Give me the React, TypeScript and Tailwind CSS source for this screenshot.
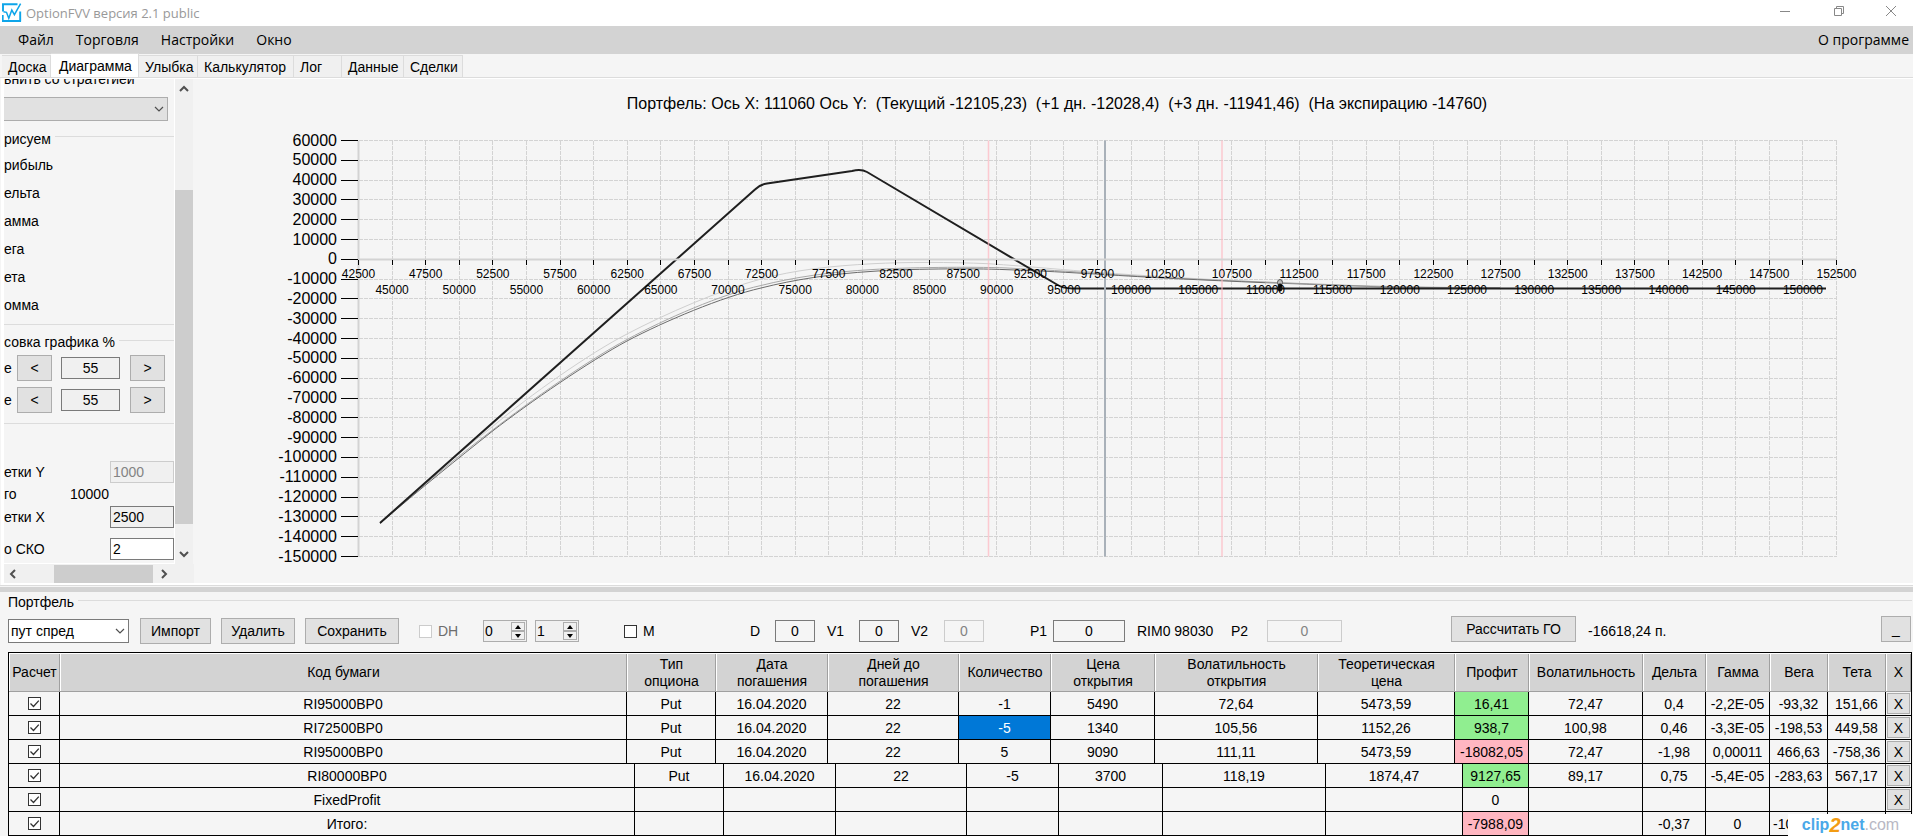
import { useState } from 'react';
import clsx from 'clsx';

// plot area of the chart
const X0 = 358.5;
const X1 = 1836.5;
const Y0 = 140.5;
const Y1 = 556.5;
const xAt = (price: number) => X0 + ((price - 42500) / 110000) * (X1 - X0);
const yAt = (pnl: number) => Y0 + ((60000 - pnl) / 210000) * (Y1 - Y0);

const xTicks = Array.from({ length: 45 }, (_, i) => 42500 + i * 2500);
const yTicks = Array.from({ length: 22 }, (_, i) => 60000 - i * 10000);

const tabs = [
  { name: 'Доска', width: 'w-[49px]' },
  { name: 'Диаграмма', width: 'w-[88px]' },
  { name: 'Улыбка', width: 'w-[59px]' },
  { name: 'Калькулятор', width: 'w-24' },
  { name: 'Лог', width: 'w-12' },
  { name: 'Данные', width: 'w-[62px]' },
  { name: 'Сделки', width: 'w-[59px]' },
];

const columns = [
  { title: 'Расчет', width: 'w-[51px]' },
  { title: 'Код бумаги', width: 'flex-1' },
  { title: 'Тип опциона', width: 'w-[89px]' },
  { title: 'Дата погашения', width: 'w-[112px]' },
  { title: 'Дней до погашения', width: 'w-[131px]' },
  { title: 'Количество', width: 'w-[92px]' },
  { title: 'Цена открытия', width: 'w-[104px]' },
  { title: 'Волатильность открытия', width: 'w-[163px]' },
  { title: 'Теоретическая цена', width: 'w-[137px]' },
  { title: 'Профит', width: 'w-[74px]' },
  { title: 'Волатильность', width: 'w-[114px]' },
  { title: 'Дельта', width: 'w-[63px]' },
  { title: 'Гамма', width: 'w-16' },
  { title: 'Вега', width: 'w-[58px]' },
  { title: 'Тета', width: 'w-[58px]' },
  { title: 'X', width: 'w-[25px]' },
];

const PROFIT = 8;

type Row = { cells: string[]; narrow?: boolean; tone?: 'up' | 'down' };

const rows: Row[] = [
  { tone: 'up', cells: ['RI95000BP0', 'Put', '16.04.2020', '22', '-1', '5490', '72,64', '5473,59', '16,41', '72,47', '0,4', '-2,2E-05', '-93,32', '151,66'] },
  { tone: 'up', cells: ['RI72500BP0', 'Put', '16.04.2020', '22', '-5', '1340', '105,56', '1152,26', '938,7', '100,98', '0,46', '-3,3E-05', '-198,53', '449,58'] },
  { tone: 'down', cells: ['RI95000BP0', 'Put', '16.04.2020', '22', '5', '9090', '111,11', '5473,59', '-18082,05', '72,47', '-1,98', '0,00011', '466,63', '-758,36'] },
  { tone: 'up', narrow: true, cells: ['RI80000BP0', 'Put', '16.04.2020', '22', '-5', '3700', '118,19', '1874,47', '9127,65', '89,17', '0,75', '-5,4E-05', '-283,63', '567,17'] },
  { narrow: true, cells: ['FixedProfit', '', '', '', '', '', '', '', '0', '', '', '', '', ''] },
  { tone: 'down', narrow: true, cells: ['Итого:', '', '', '', '', '', '', '', '-7988,09', '', '-0,37', '0', '-10', ''] },
];

const btn = 'h-[26px] shrink-0 border border-[#adadad] bg-[#e1e1e1] text-center';
const box = 'h-[22px] shrink-0 border border-[#7a7a7a] bg-[#f0f0f0] outline-none';

function Chevron({ dir = 'down', bold }: { dir?: 'up' | 'down' | 'left' | 'right'; bold?: boolean }) {
  const d = { down: 'M1 3l4 4 4-4', up: 'M1 7l4-4 4 4', left: 'M7 1L3 5l4 4', right: 'M3 1l4 4-4 4' }[dir];
  return (
    <svg viewBox="0 0 10 10" className="size-[10px]" fill="none" stroke="#505050" strokeWidth={bold ? 2 : 1.2}>
      <path d={d} />
    </svg>
  );
}

function Check({ label, checked, disabled }: { label: string; checked?: boolean; disabled?: boolean }) {
  const [on, setOn] = useState(!!checked);
  return (
    <span className="relative block size-[13px] shrink-0">
      <input
        type="checkbox"
        aria-label={label}
        checked={on}
        disabled={disabled}
        onChange={(e) => setOn(e.target.checked)}
        className="block size-[13px] appearance-none border border-[#333] bg-white disabled:border-[#ccc]"
      />
      {on && (
        <svg viewBox="0 0 13 13" className="pointer-events-none absolute inset-0" fill="none" stroke="#333" strokeWidth="1.3">
          <path d="M2.5 6.5l3 3L10.8 3.6" />
        </svg>
      )}
    </span>
  );
}

function Spinner({ label, value }: { label: string; value: string }) {
  return (
    <div className="flex h-[22px] w-11 shrink-0 border border-[#adadad] bg-[#f0f0f0] p-px">
      <input aria-label={label} defaultValue={value} className="w-6 min-w-0 flex-1 bg-transparent outline-none" />
      <div className="flex w-[14px] flex-col">
        <button aria-label={`${label} больше`} className="flex flex-1 items-center justify-center border border-[#adadad]">
          <svg viewBox="0 0 6 4" className="h-1 w-[6px]"><path d="M0 4l3-4 3 4z" /></svg>
        </button>
        <button aria-label={`${label} меньше`} className="flex flex-1 items-center justify-center border border-[#adadad]">
          <svg viewBox="0 0 6 4" className="h-1 w-[6px]"><path d="M0 0l3 4 3-4z" /></svg>
        </button>
      </div>
    </div>
  );
}

function TitleBar() {
  return (
    <header className="flex h-[26px] items-start bg-white pl-0.5 font-['Open_Sans',sans-serif] text-[13px] text-[#999]">
      <svg viewBox="0 0 20 20" className="mt-[3px] size-5" fill="none" stroke="#0ea5e9">
        <path d="M0 1.2h15.5M1 1v7.5M0.7 12v6.3M0 18h19M18.2 8.5v10" strokeWidth="1.9" />
        <path d="M1.5 8.7l3 .6 2.3 6 3-8.2 2.6 4.6L18.6 .6" strokeWidth="1.5" />
      </svg>
      <h1 className="ml-1 leading-[26px]">OptionFVV версия 2.1 public</h1>
      <div className="mr-1 ml-auto flex gap-4">
        <button aria-label="Свернуть" className="flex h-[22px] w-10 items-center justify-center">
          <svg viewBox="0 0 10 10" className="size-[10px]" stroke="#888"><path d="M0 5.5h10" /></svg>
        </button>
        <button aria-label="Развернуть" className="flex h-[22px] w-9 items-center justify-center">
          <svg viewBox="0 0 10 10" className="size-[10px]" stroke="#888" fill="none">
            <path d="M.5 2.5h7v7h-7zM2.5 2.5v-2h7v7h-2" />
          </svg>
        </button>
        <button aria-label="Закрыть" className="flex h-[22px] w-9 items-center justify-center">
          <svg viewBox="0 0 10 10" className="size-[10px]" stroke="#888"><path d="M0 0l10 10M10 0L0 10" /></svg>
        </button>
      </div>
    </header>
  );
}

function SidePanel() {
  return (
    <aside className="flex w-[190px] shrink-0 flex-col">
      <div className="flex flex-1">
        <div className="w-[171px] overflow-hidden border-r border-b border-white">
          <label htmlFor="strategy" className="-mt-2 flex h-4 items-center leading-4">внить со стратегией</label>
          <div className="relative mt-[10px] mr-1.5">
            <select id="strategy" className="block h-6 w-full appearance-none border border-l-0 border-[#adadad] bg-[#e1e1e1]" />
            <span className="pointer-events-none absolute top-[7px] right-1"><Chevron /></span>
          </div>
          <div className="mt-[6px] flex h-6 items-center gap-1">
            рисуем
            <span className="mb-1.5 h-px flex-1 bg-[#dcdcdc]" />
          </div>
          {['рибыль', 'ельта', 'амма', 'ега', 'ета', 'омма'].map((name) => (
            <div key={name} className="flex h-7 items-center">{name}</div>
          ))}
          <div className="h-[6px] border-b border-[#dcdcdc]" />
          <div className="mt-1 flex h-[26px] items-center gap-1">
            совка графика %
            <span className="mb-1 h-px flex-1 bg-[#dcdcdc]" />
          </div>
          <div className="flex flex-col gap-1.5">
            {['zoomX', 'zoomY'].map((id) => (
              <div key={id} className="flex h-[26px] items-center text-sm">
                <label htmlFor={id} className="w-[13px]">е</label>
                <button className={clsx(btn, 'w-[35px]')}>&lt;</button>
                <input id={id} defaultValue="55" className={clsx(box, 'ml-[9px] w-[59px] text-center')} />
                <button className={clsx(btn, 'ml-[10px] w-[35px]')}>&gt;</button>
              </div>
            ))}
          </div>
          <div className="h-[11px] border-b border-[#dcdcdc]" />
          <div className="mt-[37px] flex h-[22px] items-center justify-between">
            <label htmlFor="gridY">етки Y</label>
            <input id="gridY" disabled defaultValue="1000" className={clsx(box, 'w-16 border-[#ccc] px-0.5 text-[#838383]')} />
          </div>
          <div className="flex h-[22px] items-center">
            <span className="w-[66px]">го</span>10000
          </div>
          <div className="mt-px flex h-[22px] items-center justify-between">
            <label htmlFor="gridX">етки X</label>
            <input id="gridX" defaultValue="2500" className={clsx(box, 'w-16 px-0.5')} />
          </div>
          <div className="mt-[10px] flex h-[22px] items-center justify-between">
            <label htmlFor="sko">о СКО</label>
            <input id="sko" defaultValue="2" className="h-[22px] w-16 border border-[#7a7a7a] bg-white px-0.5 outline-none" />
          </div>
        </div>
        <div className="flex w-[18px] flex-col items-center bg-[#f0f0f0]">
          <button aria-label="Вверх" className="flex h-5 items-center"><Chevron dir="up" bold /></button>
          <div className="mt-[91px] w-[18px] flex-1 bg-[#cdcdcd]" />
          <button aria-label="Вниз" className="mt-5 flex h-5 items-center"><Chevron bold /></button>
        </div>
      </div>
      <div className="flex h-[19px] items-center bg-[#f0f0f0] pr-[19px] pl-1">
        <button aria-label="Влево"><Chevron dir="left" bold /></button>
        <div className="ml-9 h-[18px] w-[99px] bg-[#cdcdcd]" />
        <button aria-label="Вправо" className="ml-auto mr-1.5"><Chevron dir="right" bold /></button>
      </div>
    </aside>
  );
}

function Chart() {
  return (
    <svg viewBox="194 79 1719 504" className="min-w-0 flex-1 font-['Liberation_Sans',Arial,sans-serif]" fill="none">
      <text x="1057" y="109" textAnchor="middle" fontSize="16" fill="#000" className="whitespace-pre">
        {'Портфель: Ось X: 111060 Ось Y:  (Текущий -12105,23)  (+1 дн. -12028,4)  (+3 дн. -11941,46)  (На экспирацию -14760)'}
      </text>

      <g stroke="#d3d3d3" strokeDasharray="4 1" shapeRendering="crispEdges">
        {xTicks.map((x) => <path key={x} d={`M${xAt(x)} ${Y0}V${Y1}`} />)}
        {yTicks.map((y) => <path key={y} d={`M${X0} ${yAt(y)}H${X1}`} />)}
      </g>

      {/* +3 days, +1 day, current */}
      <path
        stroke="#cfcfcf"
        d="M380 523C420 487 458 453 492 427C530 395 590 353 627 334C665 314 720 290 761 279C795 270 830 266 873 263.7C905 262 950 262 988 263.7C1030 266.500 1065 270 1100 272.500C1180 278.500 1280 283 1353 286C1400 287.500 1450 288 1500 288"
      />
      <path
        stroke="#a8a8a8"
        d="M380 523C420 488 458 456 492 430.500C530 401 590 359 627 339.500C665 319 722 294 761 285.500C795 277 830 272 873 269.500C905 267.500 970 266.500 1007 268C1045 270 1065 271 1100 273.500C1180 279.500 1280 282.500 1353 285.500C1400 287 1450 287.500 1500 288"
      />
      <path
        stroke="#6b6b6b"
        d="M380 523.500C420 489 458 458.500 492 431.500C530 402 590 361 627 341C665 321 722 297 761 288C795 279.500 830 274 873 271.300C905 269 970 268 1007 269.700C1045 271 1065 272.300 1100 274.300C1150 277.500 1200 280 1265 282.700"
      />
      <path stroke="#8f8f8f" d="M1265 282.700C1300 284 1340 285.500 1380 286.800C1420 287.500 1460 288 1500 288" />
      <path
        stroke="#1f1f1f"
        strokeWidth="2"
        strokeLinejoin="round"
        d="M380 523L755 189.500Q760 184.500 767 183.500L852 171Q861 168.500 867 172L1056 284Q1063 288.500 1072 288.500H1826"
      />

      <path d={`M988.500 ${Y0}V${Y1}M1222 ${Y0}V${Y1}`} stroke="#ffb6c1" strokeOpacity=".7" strokeWidth="1.500" />
      <path d={`M1105 ${Y0}V${Y1}`} stroke="#a9b1b9" strokeWidth="2" />
      <path d={`M${X0} ${Y0}V${Y1}`} stroke="#d3d3d3" strokeWidth="2" />
      <path d={`M${X0} 259.500H${X1}`} stroke="#d3d3d3" strokeWidth="2" />

      <ellipse cx="1280" cy="282.500" rx="2.500" ry="3" fill="#bbb" stroke="#555" />
      <ellipse cx="1280" cy="287.500" rx="2.500" ry="4" fill="#111" />

      <g stroke="#000" shapeRendering="crispEdges">
        {yTicks.map((y) => <path key={y} d={`M341 ${yAt(y)}H358`} />)}
        {xTicks.map((x) => <path key={x} d={`M${xAt(x)} 260V265`} />)}
      </g>
      <g fill="#000" fontSize="16" textAnchor="end">
        {yTicks.map((y) => <text key={y} x="337" y={Math.round(yAt(y) + 5)}>{y}</text>)}
      </g>
      <g fill="#000" fontSize="12" textAnchor="middle">
        {xTicks.map((x, i) => <text key={x} x={xAt(x)} y={i % 2 ? 294 : 278}>{x}</text>)}
      </g>
    </svg>
  );
}

function Field({ id, label, value, width, disabled, className }: {
  id: string; label: string; value: string; width: string; disabled?: boolean; className?: string;
}) {
  return (
    <div className={clsx('flex shrink-0 items-center justify-between', className)}>
      <label htmlFor={id}>{label}</label>
      <input
        id={id}
        defaultValue={value}
        disabled={disabled}
        className={clsx('h-[22px] border bg-[#f5f5f5] text-center outline-none', width, disabled ? 'border-[#ccc] text-[#838383]' : 'border-[#7a7a7a]')}
      />
    </div>
  );
}

function Toolbar() {
  return (
    <div className="flex h-[30px] items-center">
      <div className="relative w-[121px] shrink-0">
        <select aria-label="Портфель" className="block h-6 w-full appearance-none border border-[#7a7a7a] bg-white pl-0.5">
          <option>пут спред</option>
        </select>
        <span className="pointer-events-none absolute top-[7px] right-1"><Chevron /></span>
      </div>
      <button className={clsx(btn, 'ml-[11px] w-[71px]')}>Импорт</button>
      <button className={clsx(btn, 'ml-[10px] w-[74px]')}>Удалить</button>
      <button className={clsx(btn, 'ml-[10px] w-[94px]')}>Сохранить</button>
      <div className="ml-5 flex w-16 items-center gap-1.5 text-[#6d6d6d]"><Check label="DH" disabled /> DH</div>
      <div className="flex gap-2"><Spinner label="От" value="0" /><Spinner label="До" value="1" /></div>
      <div className="ml-[45px] flex w-[126px] items-center gap-1.5"><Check label="M" /> M</div>
      <Field id="d" label="D" value="0" width="w-10" className="w-[65px]" />
      <Field id="v1" label="V1" value="0" width="w-10" className="ml-3 w-[72px]" />
      <Field id="v2" label="V2" value="0" width="w-10" disabled className="ml-3 w-[73px]" />
      <Field id="p1" label="P1" value="0" width="w-[72px]" className="ml-[46px] w-[95px]" />
      <span className="ml-3 w-[94px] shrink-0">RIM0 98030</span>
      <Field id="p2" label="P2" value="0" width="w-[75px]" disabled className="w-[111px]" />
      <button className={clsx(btn, 'ml-[109px] w-[125px] self-start')}>Рассчитать ГО</button>
      <span className="ml-3 shrink-0">-16618,24 п.</span>
      <button className={clsx(btn, 'mr-px ml-auto w-[30px] self-start')}>_</button>
    </div>
  );
}

function Positions() {
  return (
    <table className="mt-1.5 block border border-b-0 border-black text-center">
      <thead className="block">
        <tr className="flex h-[39px] border-t border-b border-t-white border-b-[#a0a0a0] bg-[#d3d3d3]">
          {columns.map((c) => (
            <th
              key={c.title}
              className={clsx(
                c.width,
                'flex shrink-0 items-center justify-center border-r border-r-[#a0a0a0] border-l border-l-white leading-[17px] font-normal',
                c.title.includes(' ') && 'px-2',
                c.title === 'Дней до погашения' && 'px-6',
              )}
            >
              {c.title}
            </th>
          ))}
        </tr>
      </thead>
      <tbody className="block">
        {rows.map((row, r) => (
          <tr key={r} className="flex h-6 items-stretch">
            <td className="flex w-[51px] items-center justify-center border-r border-b border-black">
              <Check label={row.cells[0]} checked />
            </td>
            {row.cells.map((value, i) => (
              <td
                key={i}
                className={clsx(
                  i === PROFIT && row.narrow ? 'w-[66px]' : columns[i + 1].width,
                  'shrink-0 border-r border-b border-black leading-6 whitespace-nowrap',
                  i === PROFIT && row.tone === 'up' && 'bg-[#90ee90]',
                  i === PROFIT && row.tone === 'down' && 'bg-[#ffb6c1]',
                  r === 1 && i === 4 && 'bg-[#0078d7] text-white',
                  r === 5 && i === 12 && 'pl-[3px] text-left',
                )}
              >
                {value}
              </td>
            ))}
            <td className="flex w-[25px] shrink-0 border-b border-black p-px">
              {r < 5 && (
                <button aria-label={`Удалить ${row.cells[0]}`} className="flex-1 border border-[#adadad] bg-[#e1e1e1] leading-5">X</button>
              )}
            </td>
          </tr>
        ))}
      </tbody>
    </table>
  );
}

export default function App() {
  const [tab, setTab] = useState('Диаграмма');

  return (
    <div className="relative overflow-hidden bg-[#f5f5f5] font-['Liberation_Sans',Arial,sans-serif] text-sm text-black">
      <TitleBar />
      <nav className="flex h-7 items-center gap-[22px] bg-[#d3d3d3] pr-1 pl-[18px] font-['Open_Sans',sans-serif]">
        <button>Файл</button>
        <button>Торговля</button>
        <button>Настройки</button>
        <button>Окно</button>
        <button className="ml-auto">О программе</button>
      </nav>

      <div role="tablist" className="flex h-6 items-end border-b border-[#dcdcdc] pl-0.5">
        {tabs.map(({ name, width }) => (
          <button
            key={name}
            role="tab"
            aria-selected={tab === name}
            onClick={() => setTab(name)}
            className={clsx(
              width,
              'border-t border-r border-[#dcdcdc] text-left whitespace-nowrap',
              tab === name ? 'h-6 bg-white pl-2' : 'h-[22px] bg-[#f0f0f0] pl-1.5',
            )}
          >
            {name}
          </button>
        ))}
      </div>

      <main className="ml-px flex border-t border-b-2 border-l-3 border-white">
        <SidePanel />
        <Chart />
      </main>
      <div className="border-t border-[#dcdcdc]" />
      <div className="mt-px h-[5px] bg-[#d3d3d3]" />

      <section className="pt-0.5 pr-px pl-2">
        <div className="flex h-4 items-center gap-1 leading-4">
          <h2>Портфель</h2>
          <span className="mb-1 h-px flex-1 bg-[#dcdcdc]" />
        </div>
        <div className="pt-[6px]">
          <Toolbar />
          <Positions />
        </div>
      </section>

      <div className="absolute right-0 bottom-0 flex h-[22px] w-[125px] items-center justify-center bg-white text-base leading-5 font-bold text-[#4aa8e8]">
        clip<span className="text-xl text-[#f39c12] italic">2</span>net<span className="font-normal text-[#b8b8c4]">.com</span>
      </div>
    </div>
  );
}
